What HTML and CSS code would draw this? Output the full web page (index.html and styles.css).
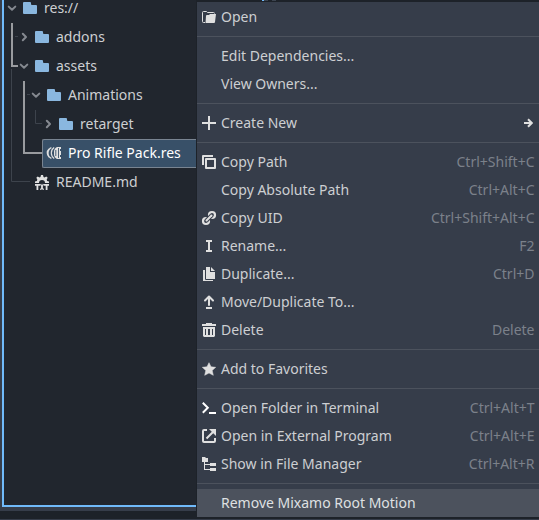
FILE: index.html
```html
<!DOCTYPE html>
<html lang="en">
<head>
<meta charset="utf-8">
<title>FileSystem</title>
<link rel="stylesheet" href="styles.css">
</head>
<body>
<svg class="defs" aria-hidden="true">
  <symbol id="folder" viewBox="0 0 16 16"><path d="M2 2a1 1 0 0 0-1 1v10a1 1 0 0 0 1 1h12a1 1 0 0 0 1-1V6a1 1 0 0 0-1-1h-4a1 1 0 0 1-1-1V3a1 1 0 0 0-1-1z"/></symbol>
  <symbol id="down" viewBox="0 0 16 16"><path d="M4.700 6.600 8 9.800l3.300-3.200" fill="none" stroke="currentColor" stroke-width="2" stroke-linecap="round" stroke-linejoin="round"/></symbol>
  <symbol id="right" viewBox="0 0 16 16"><path d="M6.800 4.700 10 8l-3.200 3.300" fill="none" stroke="currentColor" stroke-width="2" stroke-linecap="round" stroke-linejoin="round"/></symbol>
</svg>
<main class="editor">
  <section class="dock">
    <svg class="guides" width="196" height="200" fill="none">
      <path d="M11.500 69v112.500H30M35.500 110v13.500H42M15 36.500h3M27 94.500h3" stroke="#3d434c"/>
      <path d="M12 23v43h6M24 81v72h18" stroke="#999b9f" stroke-width="2"/>
    </svg>
    <ul class="tree">
      <li class="node d0"><svg class="arrow"><use href="#down"/></svg><svg class="icon folder"><use href="#folder"/></svg><span>res://</span></li>
      <li class="node d1"><svg class="arrow"><use href="#right"/></svg><svg class="icon folder"><use href="#folder"/></svg><span>addons</span></li>
      <li class="node d1"><svg class="arrow"><use href="#down"/></svg><svg class="icon folder"><use href="#folder"/></svg><span>assets</span></li>
      <li class="node d2"><svg class="arrow"><use href="#down"/></svg><svg class="icon folder"><use href="#folder"/></svg><span>Animations</span></li>
      <li class="node d3"><svg class="arrow"><use href="#right"/></svg><svg class="icon folder"><use href="#folder"/></svg><span>retarget</span></li>
      <li class="node selected"><svg class="icon" viewBox="0 0 16 16"><path d="M11 2h4v2h-1v2h1v4h-1v2h1v2h-4a6 6 0 0 1-3-6 6 6 0 0 1 3-6z"/><path d="M8.200 2.600a6.500 6.500 0 0 0 0 10.800M5.400 2.600a6 6 0 0 0 0 10.800M3 4a5.500 5.500 0 0 0 0 8" fill="none" stroke="currentColor" stroke-width="1.200"/><path d="M9.800 5v6M12.500 3v10" stroke="#385068" stroke-width=".9"/></svg><span>Pro Rifle Pack.res</span></li>
      <li class="node file"><svg class="icon" viewBox="0 0 16 16"><path d="M7 1h2l.5 2 1 .4 1.800-1 1.400 1.400-1 1.800.4 1.400 1.900.5V9h-4a3 3 0 0 0-6 0H1V7.500L2.900 7l.4-1.400-1-1.800 1.400-1.400 1.800 1 1-.4z"/><path d="M1 10h5v1.700H4.300V16H2.500v-4.300H1zM10 10h5v1.700h-1.500V16h-1.800v-4.300H10z"/><path d="m6.600 10 2.800 6m0-6-2.800 6" stroke="currentColor" stroke-width="1.300"/></svg><span>README.md</span></li>
    </ul>
  </section>
</main>
<div class="tabmark"></div>
<nav class="menu">
  <div class="item"><svg class="icon" viewBox="0 0 16 16"><path d="M7 6h1l1-1h6l-1 8a1 1 0 0 1-1 1H4.500L5 7a1 1 0 0 1 1-1z"/><path d="M4 13.500H2.500a1 1 0 0 1-1-1v-9a1 1 0 0 1 1-1h3l1 1h6a1 1 0 0 1 1 1" fill="none" stroke="currentColor"/></svg><span>Open</span></div>
  <hr>
  <div class="item"><i class="icon"></i><span>Edit Dependencies...</span></div>
  <div class="item"><i class="icon"></i><span>View Owners...</span></div>
  <hr>
  <div class="item"><svg class="icon" viewBox="0 0 16 16"><path d="M7 1h2v6h6v2H9v6H7V9H1V7h6z"/></svg><span>Create New</span><svg class="submenu" viewBox="0 0 10 10"><path d="M1 5h7M5 1.200 8.800 5 5 8.800" fill="none" stroke="currentColor" stroke-width="2"/></svg></div>
  <hr>
  <div class="item"><svg class="icon" viewBox="0 0 16 16"><path d="M5 5h9v9H5zM2 11V2h10" fill="none" stroke="currentColor" stroke-width="2" stroke-linejoin="round"/></svg><span>Copy Path</span><kbd>Ctrl+Shift+C</kbd></div>
  <div class="item"><i class="icon"></i><span>Copy Absolute Path</span><kbd>Ctrl+Alt+C</kbd></div>
  <div class="item"><svg class="icon" viewBox="0 0 16 16"><g fill="none" stroke="currentColor" stroke-width="2.200"><circle cx="11" cy="5" r="3"/><circle cx="5" cy="11" r="3"/></g><path d="m5.500 10.500 5-5" stroke="#363d4a" stroke-width="4"/><path d="m5.500 10.500 5-5" stroke="currentColor" stroke-width="2" stroke-linecap="round"/></svg><span>Copy UID</span><kbd>Ctrl+Shift+Alt+C</kbd></div>
  <div class="item"><svg class="icon" viewBox="0 0 16 16"><path d="M5 2h6v2H9v8h2v2H5v-2h2V4H5z"/></svg><span>Rename...</span><kbd>F2</kbd></div>
  <div class="item"><svg class="icon" viewBox="0 0 16 16"><path d="M5 1h4v5h5v7H5zM10 1l4 4h-4zM2 4h2v9h8v2H2z"/><path d="M4.500 4v9.500H12" fill="none" stroke="#363d4a"/></svg><span>Duplicate...</span><kbd>Ctrl+D</kbd></div>
  <div class="item"><svg class="icon" viewBox="0 0 16 16"><path d="M8 11V3M4 6.500l4-4 4 4" fill="none" stroke="currentColor" stroke-width="2" stroke-linecap="round" stroke-linejoin="round"/><path d="M5 13h6v2H5z"/></svg><span>Move/Duplicate To...</span></div>
  <div class="item"><svg class="icon" viewBox="0 0 16 16"><path d="M5 1h6v1h4v2H1V2h4zM2 5h12v9l-1 1H3l-1-1zm2 2v6h1V7zm3 0v6h2V7zm4 0v6h1V7z" fill-rule="evenodd"/></svg><span>Delete</span><kbd>Delete</kbd></div>
  <hr>
  <div class="item"><svg class="icon" viewBox="0 0 16 16"><path d="m8 1.700 2 4.100 4.700.5-3.500 3.200 1.100 4.800L8 12l-4.300 2.300 1.100-4.800-3.500-3.200 4.700-.5z" stroke="currentColor" stroke-width=".5" stroke-linejoin="round"/></svg><span>Add to Favorites</span></div>
  <hr>
  <div class="item"><svg class="icon" viewBox="0 0 16 16"><path d="m1.800 2.800 5 5-5 5" fill="none" stroke="#fff" stroke-width="2"/><path d="M8 12h7v2H8z" fill="#fff"/></svg><span>Open Folder in Terminal</span><kbd>Ctrl+Alt+T</kbd></div>
  <div class="item"><svg class="icon" viewBox="0 0 16 16"><path d="M6 2H3a1 1 0 0 0-1 1v10a1 1 0 0 0 1 1h10a1 1 0 0 0 1-1v-3M5.500 10.500l7-7" fill="none" stroke="currentColor" stroke-width="2"/><path d="M8 1h7v7z"/></svg><span>Open in External Program</span><kbd>Ctrl+Alt+E</kbd></div>
  <div class="item"><svg class="icon" viewBox="0 0 16 16"><path d="M1 1h3l1 1h2v4H4v2h5V7h6v3H9V9H4v4h5v-1h6v3H9v-1H3V6H1z"/></svg><span>Show in File Manager</span><kbd>Ctrl+Alt+R</kbd></div>
  <hr>
  <div class="item hover"><i class="icon"></i><span>Remove Mixamo Root Motion</span></div>
</nav>
</body>
</html>
```
FILE: styles.css
```css
* { box-sizing: border-box; }

body {
  margin: 0;
  height: 520px;
  overflow: hidden;
  border-bottom: 1px solid #363d4a;
  background: #1d2229;
  color: #cdcfd2;
  font: 14px/26px "Noto Sans", sans-serif;
}

.defs { position: absolute; width: 0; height: 0; }

.editor {
  height: 511px;
  padding: 0 2px 4px;
  background: #363d4a;
}

.dock {
  display: flow-root;
  height: 507px;
  border: solid #70bafa;
  border-width: 0 0 2px 2px;
  background: #21262e;
}

.guides { position: absolute; left: 0; top: 0; }

.tree {
  list-style: none;
  margin: -6px 0 0 -4px;
  padding: 0;
  width: 196px;
}

.node {
  display: flex;
  align-items: center;
  height: 29px;
  padding-bottom: 1px;
}

.node span { line-height: 16px; }

.arrow { width: 16px; height: 16px; margin-right: 2px; color: #858990; }
.icon { flex: none; width: 16px; height: 16px; margin-right: 6px; fill: currentColor; color: #e0e0e0; }
.folder { fill: #8ab7df; }

.d0 { padding-left: 4px; }
.d1 { padding-left: 16px; }
.d2 { padding-left: 28px; }
.d3 { padding-left: 40px; }
.file { padding-left: 34px; }

.selected {
  position: relative;
  margin-left: 42px;
  padding: 0 0 1px 3px;
  border: 1px solid #798491;
  border-right: 0;
  border-radius: 2px 0 0 2px;
  background: #385068;
  color: #fff;
}

.tabmark {
  position: absolute;
  z-index: 1;
  left: 262px;
  top: 0;
  width: 14px;
  height: 1px;
  background: linear-gradient(90deg, #70bafa 2px, #3c4450 2px 6px, transparent 6px 10px, #3c4450 10px);
}

.menu {
  position: absolute;
  left: 196px;
  top: 0;
  width: 343px;
  height: 519px;
  padding-top: 1px;
  border: solid #1d2229;
  border-width: 2px 0 2px 1px;
  background: #363d4a;
}

.item {
  display: flex;
  align-items: center;
  height: 28px;
  padding: 0 4px;
}

.item .icon { margin-right: 4px; }
.item kbd { margin: 0 .5px 0 auto; font: inherit; color: #7c818a; }
.item.hover { background: #4c525d; color: #dfe0e2; }
.submenu { width: 10px; height: 10px; margin: 0 2px 0 auto; color: #e0e0e0; }

hr {
  height: 1px;
  margin: 5px 0;
  border: 0;
  background: #4c525d;
}
```
